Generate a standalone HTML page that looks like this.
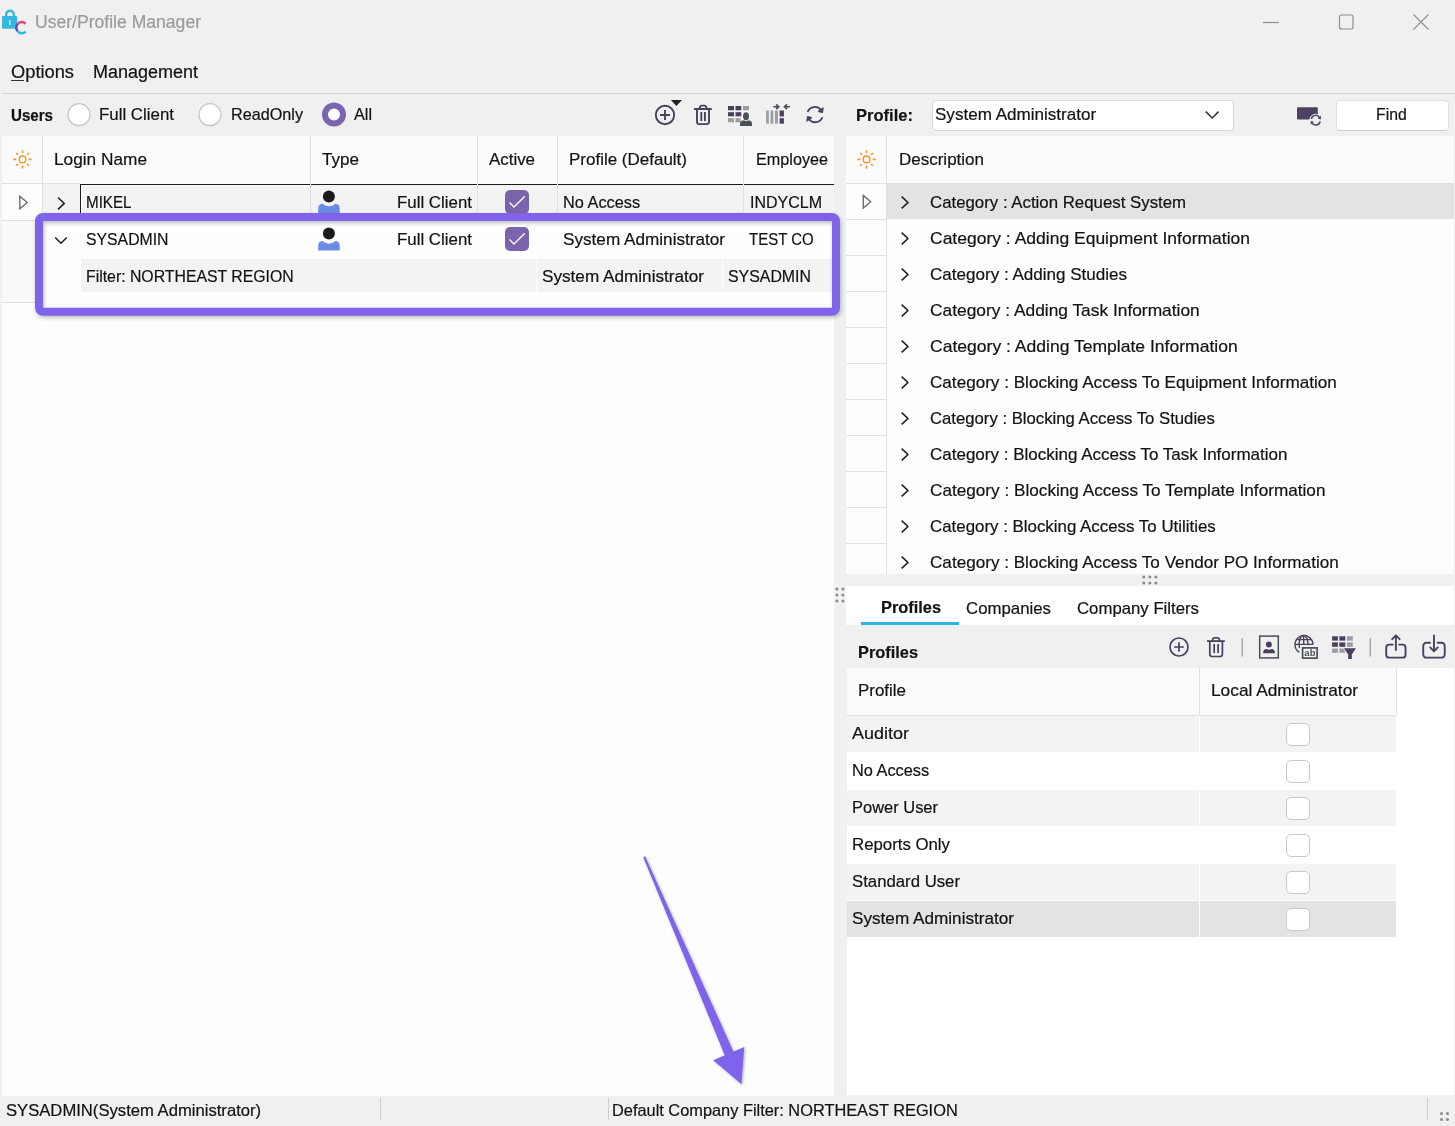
<!DOCTYPE html>
<html><head><meta charset="utf-8"><style>
html,body{margin:0;padding:0;}
body{width:1455px;height:1126px;overflow:hidden;position:relative;background:#f0f0f0;font-family:"Liberation Sans",sans-serif;}
</style></head><body>
<div style="position:absolute;left:11px;top:80px;width:13px;height:1px;background:#333;"></div>
<div style="position:absolute;left:2px;top:93px;width:1453px;height:1px;background:#d4d4d4;"></div>
<div style="position:absolute;left:931.5px;top:99.5px;width:302px;height:31px;background:#ffffff;box-sizing:border-box;border:1px solid #d6d6d6;border-radius:4px"></div>
<div style="position:absolute;left:1335.5px;top:99.5px;width:113px;height:31px;background:#ffffff;box-sizing:border-box;border:1px solid #e0e0e0;border-bottom-color:#cfcfcf;border-radius:4px"></div>
<div style="position:absolute;left:2px;top:136px;width:832px;height:960px;background:#fdfdfd;"></div>
<div style="position:absolute;left:2px;top:136px;width:832px;height:48px;background:#fbfbfb;"></div>
<div style="position:absolute;left:42px;top:136px;width:1px;height:48px;background:#e0e0e0;"></div>
<div style="position:absolute;left:310px;top:136px;width:1px;height:48px;background:#e0e0e0;"></div>
<div style="position:absolute;left:477px;top:136px;width:1px;height:48px;background:#e0e0e0;"></div>
<div style="position:absolute;left:557px;top:136px;width:1px;height:48px;background:#e0e0e0;"></div>
<div style="position:absolute;left:743px;top:136px;width:1px;height:48px;background:#e0e0e0;"></div>
<div style="position:absolute;left:2px;top:183px;width:78px;height:1px;background:#e0e0e0;"></div>
<div style="position:absolute;left:42px;top:184px;width:792px;height:36px;background:#f3f3f3;"></div>
<div style="position:absolute;left:2px;top:184px;width:40px;height:36px;background:#fdfdfd;"></div>
<div style="position:absolute;left:2px;top:220px;width:40px;height:1px;background:#e0e0e0;"></div>
<div style="position:absolute;left:42px;top:184px;width:1px;height:36px;background:#e0e0e0;"></div>
<div style="position:absolute;left:310px;top:184px;width:1px;height:36px;background:#e0e0e0;"></div>
<div style="position:absolute;left:477px;top:184px;width:1px;height:36px;background:#e0e0e0;"></div>
<div style="position:absolute;left:557px;top:184px;width:1px;height:36px;background:#e0e0e0;"></div>
<div style="position:absolute;left:743px;top:184px;width:1px;height:36px;background:#e0e0e0;"></div>
<div style="position:absolute;left:80px;top:184px;width:754px;height:1px;background:#1a1a1a;"></div>
<div style="position:absolute;left:310px;top:184px;width:1px;height:1px;background:#fdfdfd;"></div>
<div style="position:absolute;left:477px;top:184px;width:1px;height:1px;background:#fdfdfd;"></div>
<div style="position:absolute;left:557px;top:184px;width:1px;height:1px;background:#fdfdfd;"></div>
<div style="position:absolute;left:743px;top:184px;width:1px;height:1px;background:#fdfdfd;"></div>
<div style="position:absolute;left:80px;top:184px;width:1px;height:36px;background:#1a1a1a;"></div>
<div style="position:absolute;left:81px;top:185px;width:1px;height:35px;background:#ffffff;"></div>
<div style="position:absolute;left:81px;top:185px;width:229px;height:1px;background:#ffffff;"></div>
<div style="position:absolute;left:2px;top:221px;width:40px;height:81px;background:#f9f9f9;"></div>
<div style="position:absolute;left:42px;top:221px;width:1px;height:81px;background:#e0e0e0;"></div>
<div style="position:absolute;left:2px;top:302px;width:40px;height:1px;background:#e0e0e0;"></div>
<div style="position:absolute;left:43px;top:221px;width:791px;height:87px;background:#fefefe;"></div>
<div style="position:absolute;left:81px;top:259px;width:751px;height:33px;background:#f3f3f3;"></div>
<div style="position:absolute;left:536px;top:259px;width:1px;height:33px;background:#fdfdfd;"></div>
<div style="position:absolute;left:722px;top:259px;width:1px;height:33px;background:#fdfdfd;"></div>
<div style="position:absolute;left:846px;top:136px;width:608px;height:438px;background:#fdfdfd;"></div>
<div style="position:absolute;left:846px;top:136px;width:608px;height:47px;background:#fbfbfb;"></div>
<div style="position:absolute;left:886px;top:136px;width:1px;height:438px;background:#e0e0e0;"></div>
<div style="position:absolute;left:846px;top:183px;width:608px;height:1px;background:#e0e0e0;"></div>
<div style="position:absolute;left:887px;top:184px;width:567px;height:35px;background:#e3e3e3;"></div>
<div style="position:absolute;left:846px;top:219px;width:40px;height:1px;background:#e0e0e0;"></div>
<div style="position:absolute;left:846px;top:255px;width:40px;height:1px;background:#e0e0e0;"></div>
<div style="position:absolute;left:846px;top:291px;width:40px;height:1px;background:#e0e0e0;"></div>
<div style="position:absolute;left:846px;top:327px;width:40px;height:1px;background:#e0e0e0;"></div>
<div style="position:absolute;left:846px;top:363px;width:40px;height:1px;background:#e0e0e0;"></div>
<div style="position:absolute;left:846px;top:399px;width:40px;height:1px;background:#e0e0e0;"></div>
<div style="position:absolute;left:846px;top:435px;width:40px;height:1px;background:#e0e0e0;"></div>
<div style="position:absolute;left:846px;top:471px;width:40px;height:1px;background:#e0e0e0;"></div>
<div style="position:absolute;left:846px;top:507px;width:40px;height:1px;background:#e0e0e0;"></div>
<div style="position:absolute;left:846px;top:543px;width:40px;height:1px;background:#e0e0e0;"></div>
<div style="position:absolute;left:834px;top:574px;width:621px;height:12px;background:#f0f0f0;"></div>
<div style="position:absolute;left:846px;top:586px;width:608px;height:39px;background:#ffffff;"></div>
<div style="position:absolute;left:861px;top:622px;width:98px;height:4px;background:#2cb5e0;"></div>
<div style="position:absolute;left:846px;top:625px;width:608px;height:43px;background:#f0f0f0;"></div>
<div style="position:absolute;left:847px;top:668px;width:607px;height:427px;background:#ffffff;"></div>
<div style="position:absolute;left:847px;top:668px;width:549px;height:47px;background:#fbfbfb;"></div>
<div style="position:absolute;left:847px;top:715px;width:549px;height:1px;background:#e0e0e0;"></div>
<div style="position:absolute;left:1199px;top:668px;width:1px;height:47px;background:#e0e0e0;"></div>
<div style="position:absolute;left:1396px;top:668px;width:1px;height:47px;background:#e0e0e0;"></div>
<div style="position:absolute;left:847px;top:716px;width:549px;height:36px;background:#f3f3f3;"></div>
<div style="position:absolute;left:1199px;top:716px;width:1px;height:36px;background:#ffffff;"></div>
<div style="position:absolute;left:1286px;top:722.5px;width:23.5px;height:23.5px;box-sizing:border-box;border:1px solid #c9c9c9;border-radius:5px;background:#fff"></div>
<div style="position:absolute;left:847px;top:753px;width:549px;height:36px;background:#ffffff;"></div>
<div style="position:absolute;left:1199px;top:753px;width:1px;height:36px;background:#ffffff;"></div>
<div style="position:absolute;left:1286px;top:759.5px;width:23.5px;height:23.5px;box-sizing:border-box;border:1px solid #c9c9c9;border-radius:5px;background:#fff"></div>
<div style="position:absolute;left:847px;top:790px;width:549px;height:36px;background:#f3f3f3;"></div>
<div style="position:absolute;left:1199px;top:790px;width:1px;height:36px;background:#ffffff;"></div>
<div style="position:absolute;left:1286px;top:796.5px;width:23.5px;height:23.5px;box-sizing:border-box;border:1px solid #c9c9c9;border-radius:5px;background:#fff"></div>
<div style="position:absolute;left:847px;top:827px;width:549px;height:36px;background:#ffffff;"></div>
<div style="position:absolute;left:1199px;top:827px;width:1px;height:36px;background:#ffffff;"></div>
<div style="position:absolute;left:1286px;top:833.5px;width:23.5px;height:23.5px;box-sizing:border-box;border:1px solid #c9c9c9;border-radius:5px;background:#fff"></div>
<div style="position:absolute;left:847px;top:864px;width:549px;height:36px;background:#f3f3f3;"></div>
<div style="position:absolute;left:1199px;top:864px;width:1px;height:36px;background:#ffffff;"></div>
<div style="position:absolute;left:1286px;top:870.5px;width:23.5px;height:23.5px;box-sizing:border-box;border:1px solid #c9c9c9;border-radius:5px;background:#fff"></div>
<div style="position:absolute;left:847px;top:901px;width:549px;height:36px;background:#e3e3e3;"></div>
<div style="position:absolute;left:1199px;top:901px;width:1px;height:36px;background:#ffffff;"></div>
<div style="position:absolute;left:1286px;top:907.5px;width:23.5px;height:23.5px;box-sizing:border-box;border:1px solid #c9c9c9;border-radius:5px;background:#fff"></div>
<div style="position:absolute;left:380px;top:1098px;width:1px;height:22px;background:#cfcfcf;"></div>
<div style="position:absolute;left:608px;top:1098px;width:1px;height:22px;background:#cfcfcf;"></div>
<div style="position:absolute;left:1427px;top:1098px;width:1px;height:22px;background:#cfcfcf;"></div>
<div style="position:absolute;left:35px;top:14.19px;font-size:17.5px;line-height:17.5px;font-weight:normal;color:#9b9b9b;white-space:nowrap;-webkit-text-stroke:0.2px #9b9b9b;transform:scaleX(1.0040);transform-origin:0 0;">User/Profile Manager</div>
<div style="position:absolute;left:11px;top:62.76px;font-size:18px;line-height:18px;font-weight:normal;color:#121212;white-space:nowrap;-webkit-text-stroke:0.2px #121212;transform:scaleX(1.0156);transform-origin:0 0;">Options</div>
<div style="position:absolute;left:93px;top:62.76px;font-size:18px;line-height:18px;font-weight:normal;color:#121212;white-space:nowrap;-webkit-text-stroke:0.2px #121212;transform:scaleX(0.9994);transform-origin:0 0;">Management</div>
<div style="position:absolute;left:11px;top:108.26px;font-size:16px;line-height:16px;font-weight:bold;color:#121212;white-space:nowrap;-webkit-text-stroke:0.2px #121212;transform:scaleX(0.9443);transform-origin:0 0;">Users</div>
<div style="position:absolute;left:99px;top:105.61px;font-size:17px;line-height:17px;font-weight:normal;color:#121212;white-space:nowrap;-webkit-text-stroke:0.2px #121212;transform:scaleX(0.9923);transform-origin:0 0;">Full Client</div>
<div style="position:absolute;left:230.5px;top:105.61px;font-size:17px;line-height:17px;font-weight:normal;color:#121212;white-space:nowrap;-webkit-text-stroke:0.2px #121212;transform:scaleX(0.9524);transform-origin:0 0;">ReadOnly</div>
<div style="position:absolute;left:354px;top:105.61px;font-size:17px;line-height:17px;font-weight:normal;color:#121212;white-space:nowrap;-webkit-text-stroke:0.2px #121212;transform:scaleX(0.9528);transform-origin:0 0;">All</div>
<div style="position:absolute;left:855.7px;top:106.61px;font-size:17px;line-height:17px;font-weight:bold;color:#121212;white-space:nowrap;-webkit-text-stroke:0.2px #121212;transform:scaleX(0.9733);transform-origin:0 0;">Profile:</div>
<div style="position:absolute;left:935.4px;top:106.11px;font-size:17px;line-height:17px;font-weight:normal;color:#121212;white-space:nowrap;-webkit-text-stroke:0.2px #121212;transform:scaleX(1.0028);transform-origin:0 0;">System Administrator</div>
<div style="position:absolute;left:1375.6px;top:106.41px;font-size:17px;line-height:17px;font-weight:normal;color:#121212;white-space:nowrap;-webkit-text-stroke:0.2px #121212;transform:scaleX(0.9283);transform-origin:0 0;">Find</div>
<div style="position:absolute;left:54px;top:150.61px;font-size:17px;line-height:17px;font-weight:normal;color:#121212;white-space:nowrap;-webkit-text-stroke:0.2px #121212;transform:scaleX(1.0146);transform-origin:0 0;">Login Name</div>
<div style="position:absolute;left:322px;top:150.61px;font-size:17px;line-height:17px;font-weight:normal;color:#121212;white-space:nowrap;-webkit-text-stroke:0.2px #121212;transform:scaleX(1.0039);transform-origin:0 0;">Type</div>
<div style="position:absolute;left:489px;top:150.61px;font-size:17px;line-height:17px;font-weight:normal;color:#121212;white-space:nowrap;-webkit-text-stroke:0.2px #121212;transform:scaleX(0.9937);transform-origin:0 0;">Active</div>
<div style="position:absolute;left:569px;top:150.61px;font-size:17px;line-height:17px;font-weight:normal;color:#121212;white-space:nowrap;-webkit-text-stroke:0.2px #121212;transform:scaleX(0.9992);transform-origin:0 0;">Profile (Default)</div>
<div style="position:absolute;left:756px;top:150.61px;font-size:17px;line-height:17px;font-weight:normal;color:#121212;white-space:nowrap;-webkit-text-stroke:0.2px #121212;transform:scaleX(0.9524);transform-origin:0 0;">Employee</div>
<div style="position:absolute;left:85.5px;top:193.61px;font-size:17px;line-height:17px;font-weight:normal;color:#121212;white-space:nowrap;-webkit-text-stroke:0.2px #121212;transform:scaleX(0.8919);transform-origin:0 0;">MIKEL</div>
<div style="position:absolute;left:397px;top:193.61px;font-size:17px;line-height:17px;font-weight:normal;color:#121212;white-space:nowrap;-webkit-text-stroke:0.2px #121212;transform:scaleX(0.9923);transform-origin:0 0;">Full Client</div>
<div style="position:absolute;left:563px;top:193.61px;font-size:17px;line-height:17px;font-weight:normal;color:#121212;white-space:nowrap;-webkit-text-stroke:0.2px #121212;transform:scaleX(0.9600);transform-origin:0 0;">No Access</div>
<div style="position:absolute;left:750px;top:193.61px;font-size:17px;line-height:17px;font-weight:normal;color:#121212;white-space:nowrap;-webkit-text-stroke:0.2px #121212;transform:scaleX(0.9411);transform-origin:0 0;">INDYCLM</div>
<div style="position:absolute;left:85.5px;top:230.61px;font-size:17px;line-height:17px;font-weight:normal;color:#121212;white-space:nowrap;-webkit-text-stroke:0.2px #121212;transform:scaleX(0.9291);transform-origin:0 0;">SYSADMIN</div>
<div style="position:absolute;left:397px;top:230.61px;font-size:17px;line-height:17px;font-weight:normal;color:#121212;white-space:nowrap;-webkit-text-stroke:0.2px #121212;transform:scaleX(0.9923);transform-origin:0 0;">Full Client</div>
<div style="position:absolute;left:563px;top:230.61px;font-size:17px;line-height:17px;font-weight:normal;color:#121212;white-space:nowrap;-webkit-text-stroke:0.2px #121212;transform:scaleX(1.0090);transform-origin:0 0;">System Administrator</div>
<div style="position:absolute;left:749px;top:230.61px;font-size:17px;line-height:17px;font-weight:normal;color:#121212;white-space:nowrap;-webkit-text-stroke:0.2px #121212;transform:scaleX(0.8823);transform-origin:0 0;">TEST CO</div>
<div style="position:absolute;left:86px;top:267.61px;font-size:17px;line-height:17px;font-weight:normal;color:#121212;white-space:nowrap;-webkit-text-stroke:0.2px #121212;transform:scaleX(0.9305);transform-origin:0 0;">Filter: NORTHEAST REGION</div>
<div style="position:absolute;left:542px;top:267.61px;font-size:17px;line-height:17px;font-weight:normal;color:#121212;white-space:nowrap;-webkit-text-stroke:0.2px #121212;transform:scaleX(1.0090);transform-origin:0 0;">System Administrator</div>
<div style="position:absolute;left:728px;top:267.61px;font-size:17px;line-height:17px;font-weight:normal;color:#121212;white-space:nowrap;-webkit-text-stroke:0.2px #121212;transform:scaleX(0.9348);transform-origin:0 0;">SYSADMIN</div>
<div style="position:absolute;left:898.7px;top:150.61px;font-size:17px;line-height:17px;font-weight:normal;color:#121212;white-space:nowrap;-webkit-text-stroke:0.2px #121212;transform:scaleX(0.9996);transform-origin:0 0;">Description</div>
<div style="position:absolute;left:930px;top:193.81px;font-size:17px;line-height:17px;font-weight:normal;color:#121212;white-space:nowrap;-webkit-text-stroke:0.2px #121212;transform:scaleX(0.9891);transform-origin:0 0;">Category : Action Request System</div>
<div style="position:absolute;left:930px;top:229.81px;font-size:17px;line-height:17px;font-weight:normal;color:#121212;white-space:nowrap;-webkit-text-stroke:0.2px #121212;transform:scaleX(1.0294);transform-origin:0 0;">Category : Adding Equipment Information</div>
<div style="position:absolute;left:930px;top:265.81px;font-size:17px;line-height:17px;font-weight:normal;color:#121212;white-space:nowrap;-webkit-text-stroke:0.2px #121212;transform:scaleX(1.0025);transform-origin:0 0;">Category : Adding Studies</div>
<div style="position:absolute;left:930px;top:301.81px;font-size:17px;line-height:17px;font-weight:normal;color:#121212;white-space:nowrap;-webkit-text-stroke:0.2px #121212;transform:scaleX(1.0206);transform-origin:0 0;">Category : Adding Task Information</div>
<div style="position:absolute;left:930px;top:337.81px;font-size:17px;line-height:17px;font-weight:normal;color:#121212;white-space:nowrap;-webkit-text-stroke:0.2px #121212;transform:scaleX(1.0315);transform-origin:0 0;">Category : Adding Template Information</div>
<div style="position:absolute;left:930px;top:373.81px;font-size:17px;line-height:17px;font-weight:normal;color:#121212;white-space:nowrap;-webkit-text-stroke:0.2px #121212;transform:scaleX(1.0065);transform-origin:0 0;">Category : Blocking Access To Equipment Information</div>
<div style="position:absolute;left:930px;top:409.81px;font-size:17px;line-height:17px;font-weight:normal;color:#121212;white-space:nowrap;-webkit-text-stroke:0.2px #121212;transform:scaleX(0.9827);transform-origin:0 0;">Category : Blocking Access To Studies</div>
<div style="position:absolute;left:930px;top:445.81px;font-size:17px;line-height:17px;font-weight:normal;color:#121212;white-space:nowrap;-webkit-text-stroke:0.2px #121212;transform:scaleX(0.9999);transform-origin:0 0;">Category : Blocking Access To Task Information</div>
<div style="position:absolute;left:930px;top:481.81px;font-size:17px;line-height:17px;font-weight:normal;color:#121212;white-space:nowrap;-webkit-text-stroke:0.2px #121212;transform:scaleX(1.0100);transform-origin:0 0;">Category : Blocking Access To Template Information</div>
<div style="position:absolute;left:930px;top:517.81px;font-size:17px;line-height:17px;font-weight:normal;color:#121212;white-space:nowrap;-webkit-text-stroke:0.2px #121212;transform:scaleX(0.9927);transform-origin:0 0;">Category : Blocking Access To Utilities</div>
<div style="position:absolute;left:930px;top:553.81px;font-size:17px;line-height:17px;font-weight:normal;color:#121212;white-space:nowrap;-webkit-text-stroke:0.2px #121212;transform:scaleX(1.0067);transform-origin:0 0;">Category : Blocking Access To Vendor PO Information</div>
<div style="position:absolute;left:880.5px;top:598.61px;font-size:17px;line-height:17px;font-weight:bold;color:#121212;white-space:nowrap;-webkit-text-stroke:0.2px #121212;transform:scaleX(0.9622);transform-origin:0 0;">Profiles</div>
<div style="position:absolute;left:966px;top:599.61px;font-size:17px;line-height:17px;font-weight:normal;color:#121212;white-space:nowrap;-webkit-text-stroke:0.2px #121212;transform:scaleX(0.9885);transform-origin:0 0;">Companies</div>
<div style="position:absolute;left:1077px;top:599.61px;font-size:17px;line-height:17px;font-weight:normal;color:#121212;white-space:nowrap;-webkit-text-stroke:0.2px #121212;transform:scaleX(0.9858);transform-origin:0 0;">Company Filters</div>
<div style="position:absolute;left:858px;top:643.61px;font-size:17px;line-height:17px;font-weight:bold;color:#121212;white-space:nowrap;-webkit-text-stroke:0.2px #121212;transform:scaleX(0.9622);transform-origin:0 0;">Profiles</div>
<div style="position:absolute;left:858px;top:682.11px;font-size:17px;line-height:17px;font-weight:normal;color:#121212;white-space:nowrap;-webkit-text-stroke:0.2px #121212;transform:scaleX(0.9961);transform-origin:0 0;">Profile</div>
<div style="position:absolute;left:1211px;top:682.11px;font-size:17px;line-height:17px;font-weight:normal;color:#121212;white-space:nowrap;-webkit-text-stroke:0.2px #121212;transform:scaleX(1.0172);transform-origin:0 0;">Local Administrator</div>
<div style="position:absolute;left:852px;top:725.21px;font-size:17px;line-height:17px;font-weight:normal;color:#121212;white-space:nowrap;-webkit-text-stroke:0.2px #121212;transform:scaleX(1.0582);transform-origin:0 0;">Auditor</div>
<div style="position:absolute;left:852px;top:762.21px;font-size:17px;line-height:17px;font-weight:normal;color:#121212;white-space:nowrap;-webkit-text-stroke:0.2px #121212;transform:scaleX(0.9600);transform-origin:0 0;">No Access</div>
<div style="position:absolute;left:852px;top:799.21px;font-size:17px;line-height:17px;font-weight:normal;color:#121212;white-space:nowrap;-webkit-text-stroke:0.2px #121212;transform:scaleX(0.9684);transform-origin:0 0;">Power User</div>
<div style="position:absolute;left:852px;top:836.21px;font-size:17px;line-height:17px;font-weight:normal;color:#121212;white-space:nowrap;-webkit-text-stroke:0.2px #121212;transform:scaleX(0.9879);transform-origin:0 0;">Reports Only</div>
<div style="position:absolute;left:852px;top:873.21px;font-size:17px;line-height:17px;font-weight:normal;color:#121212;white-space:nowrap;-webkit-text-stroke:0.2px #121212;transform:scaleX(0.9853);transform-origin:0 0;">Standard User</div>
<div style="position:absolute;left:852px;top:910.21px;font-size:17px;line-height:17px;font-weight:normal;color:#121212;white-space:nowrap;-webkit-text-stroke:0.2px #121212;transform:scaleX(1.0090);transform-origin:0 0;">System Administrator</div>
<div style="position:absolute;left:6px;top:1102.03px;font-size:16.5px;line-height:16.5px;font-weight:normal;color:#121212;white-space:nowrap;-webkit-text-stroke:0.2px #121212;transform:scaleX(1.0080);transform-origin:0 0;">SYSADMIN(System Administrator)</div>
<div style="position:absolute;left:612px;top:1102.03px;font-size:16.5px;line-height:16.5px;font-weight:normal;color:#121212;white-space:nowrap;-webkit-text-stroke:0.2px #121212;transform:scaleX(0.9913);transform-origin:0 0;">Default Company Filter: NORTHEAST REGION</div>
<svg style="position:absolute;left:0;top:0" width="1455" height="1126" viewBox="0 0 1455 1126">
<defs>
<filter id="sh" x="-5%" y="-5%" width="110%" height="115%"><feGaussianBlur in="SourceAlpha" stdDeviation="2"/><feOffset dx="0.5" dy="1.5"/><feComponentTransfer><feFuncA type="linear" slope="0.27"/></feComponentTransfer><feMerge><feMergeNode/><feMergeNode in="SourceGraphic"/></feMerge></filter>
<filter id="sh2" x="-20%" y="-10%" width="140%" height="120%"><feGaussianBlur in="SourceAlpha" stdDeviation="1.5"/><feOffset dx="1" dy="1"/><feComponentTransfer><feFuncA type="linear" slope="0.3"/></feComponentTransfer><feMerge><feMergeNode/><feMergeNode in="SourceGraphic"/></feMerge></filter>
</defs>
<!-- app icon -->
<path d="M6.2 16.5 V14.5 A3.8 3.8 0 0 1 13.8 14.5 V16.5" fill="none" stroke="#33b8df" stroke-width="2.4"/>
<rect x="2" y="16" width="15.2" height="12.8" rx="1.2" fill="#33b8df"/>
<rect x="9.2" y="20" width="1.2" height="4.8" fill="#fff"/>
<path d="M25.5 23.8 A5 5 0 0 0 17.6 24.2" fill="none" stroke="#e0458f" stroke-width="2.6"/>
<path d="M17.6 24.2 A5 5 0 0 0 17.6 31" fill="none" stroke="#6a4aa8" stroke-width="2.6"/>
<path d="M17.6 31 A5 5 0 0 0 25.5 31.6" fill="none" stroke="#2db8e0" stroke-width="2.6"/>
<!-- window controls -->
<line x1="1263" y1="22.5" x2="1279" y2="22.5" stroke="#8f8f8f" stroke-width="1.2"/>
<rect x="1339.5" y="15" width="13.5" height="14" rx="2" fill="none" stroke="#8f8f8f" stroke-width="1.2"/>
<path d="M1413.5 14.5 L1428.5 29.5 M1428.5 14.5 L1413.5 29.5" stroke="#8f8f8f" stroke-width="1.2"/>
<!-- radios -->
<circle cx="79" cy="114.7" r="11" fill="#fff" stroke="#c6c6c6" stroke-width="1.2"/>
<circle cx="210" cy="114.7" r="11" fill="#fff" stroke="#c6c6c6" stroke-width="1.2"/>
<circle cx="334" cy="114.5" r="9" fill="#fff" stroke="#7a64ad" stroke-width="6"/>
<!-- left toolbar icons -->
<g fill="none" stroke="#4a3f5e" stroke-width="1.9">
<circle cx="665" cy="115" r="9.2"/>
<path d="M660 115 H670 M665 110 V120"/>
<path d="M694 109 H711.8 M699.8 108.5 V107.5 A2.2 2.2 0 0 1 702 105.6 H704.2 A2.2 2.2 0 0 1 706.4 107.5 V108.5 M697 109.5 V122 A2.2 2.2 0 0 0 699.2 124.1 H706.8 A2.2 2.2 0 0 0 709 122 V109.5 M701.3 112 V121 M704.9 112 V121"/>
</g>
<path d="M670.9 100.1 H682 L676.4 105.9 Z" fill="#222"/>
<g>
<rect x="728" y="106" width="6" height="4.3" fill="#4a3f5e"/><rect x="735.5" y="106" width="5.8" height="4.3" fill="#4a3f5e"/><rect x="743" y="106" width="6" height="4.3" fill="#9a9ea2"/>
<rect x="728" y="112.2" width="6" height="4.1" fill="#4a3f5e"/><rect x="735.5" y="112.2" width="5.8" height="4.1" fill="#4a3f5e"/>
<rect x="728" y="118.2" width="6" height="4.1" fill="#9a9ea2"/><rect x="735.5" y="118.2" width="5" height="4.1" fill="#9a9ea2"/>
<ellipse cx="746" cy="116.3" rx="4.2" ry="5.2" fill="#fff" opacity="0.9"/>
<ellipse cx="746" cy="116.3" rx="3" ry="4" fill="#4a5058"/>
<path d="M740 126 V123.8 Q740 121 743 120.6 L744.5 120.6 Q746 122 747.5 120.6 L749 120.6 Q752 121 752 123.8 V126 Z" fill="#4a5058"/>
</g>
<g fill="#9a9ea2">
<rect x="766.1" y="110.5" width="2.7" height="13.2"/><rect x="770.5" y="110.5" width="2.8" height="13.2"/><rect x="775" y="110.5" width="2.9" height="13.2"/>
</g>
<rect x="779.6" y="110.5" width="4.3" height="6" fill="#4a3f5e"/><rect x="779.6" y="118.2" width="4.3" height="5.5" fill="#4a3f5e"/>
<g fill="none" stroke="#4a5058" stroke-width="1.6">
<path d="M773.3 106.7 H778.6 M776.2 104.3 L778.8 106.7 L776.2 109.1"/>
<path d="M784.6 106.7 H789.9 M787 104.3 L784.4 106.7 L787 109.1"/>
</g>
<g fill="none" stroke="#4a3f5e" stroke-width="1.8">
<path d="M807.6 112 A7.8 7.8 0 0 1 821.2 110.2"/>
<path d="M822.4 117.2 A7.8 7.8 0 0 1 808.8 119"/>
</g>
<path d="M818 111.5 L822.6 112.6 L823.2 107.8 Z" fill="#4a3f5e" stroke="#4a3f5e" stroke-width="1"/>
<path d="M812 117.6 L807.4 116.5 L806.8 121.3 Z" fill="#4a3f5e" stroke="#4a3f5e" stroke-width="1"/>
<!-- sun icons -->
<g fill="none" stroke="#f7901e">
<circle cx="22.5" cy="159.4" r="3.35" stroke-width="1.35"/>
<path stroke-width="1.6" d="M22.5 150.4 V153.1 M22.5 165.7 V168.4 M13.5 159.4 H16.2 M28.8 159.4 H31.5 M16.2 153.1 L17.9 154.8 M27.1 164 L28.8 165.7 M28.8 153.1 L27.1 154.8 M16.2 165.7 L17.9 164"/>
</g>
<g fill="none" stroke="#f7901e" transform="translate(844,0)">
<circle cx="22.5" cy="159.4" r="3.35" stroke-width="1.35"/>
<path stroke-width="1.6" d="M22.5 150.4 V153.1 M22.5 165.7 V168.4 M13.5 159.4 H16.2 M28.8 159.4 H31.5 M16.2 153.1 L17.9 154.8 M27.1 164 L28.8 165.7 M28.8 153.1 L27.1 154.8 M16.2 165.7 L17.9 164"/>
</g>
<!-- row indicators -->
<path d="M19.8 196.2 L27.2 202.5 L19.8 208.8 Z" fill="none" stroke="#6c6c6c" stroke-width="1.4" stroke-linejoin="miter"/>
<path d="M863.3 195.4 L870.7 201.7 L863.3 208 Z" fill="none" stroke="#6c6c6c" stroke-width="1.4"/>
<!-- chevrons -->
<g fill="none" stroke="#222" stroke-width="1.6">
<path d="M58 197.5 L64.2 203.4 L58 209.3"/>
<path d="M55.2 237.5 L61 243.2 L66.8 237.5"/>
<path d="M1205.8 111.6 L1212.2 118 L1218.6 111.6" stroke="#333" stroke-width="1.5"/>
</g>
<g fill="none" stroke="#222" stroke-width="1.6" id="chev">
<path d="M901.7 196.6 L907.9 202.5 L901.7 208.4"/>
<path d="M901.7 232.6 L907.9 238.5 L901.7 244.4"/>
<path d="M901.7 268.6 L907.9 274.5 L901.7 280.4"/>
<path d="M901.7 304.6 L907.9 310.5 L901.7 316.4"/>
<path d="M901.7 340.6 L907.9 346.5 L901.7 352.4"/>
<path d="M901.7 376.6 L907.9 382.5 L901.7 388.4"/>
<path d="M901.7 412.6 L907.9 418.5 L901.7 424.4"/>
<path d="M901.7 448.6 L907.9 454.5 L901.7 460.4"/>
<path d="M901.7 484.6 L907.9 490.5 L901.7 496.4"/>
<path d="M901.7 520.6 L907.9 526.5 L901.7 532.4"/>
<path d="M901.7 556.6 L907.9 562.5 L901.7 568.4"/>
</g>
<!-- person icons -->
<g>
<path d="M318.2 213.5 V208.5 Q318.2 204 322.5 203.7 Q329 209 335.5 203.7 Q339.7 204 339.7 208.5 V213.5 Z" fill="#6a8be6"/>
<circle cx="328.9" cy="196.5" r="6" fill="#1a1a1a"/>
<path d="M318.2 250.6 V245.8 Q318.2 241.3 322.5 241 Q329 246.3 335.5 241 Q339.7 241.3 339.7 245.8 V250.6 Z" fill="#6a8be6"/>
<circle cx="328.9" cy="233.5" r="6" fill="#1a1a1a"/>
</g>
<!-- checkboxes -->
<g>
<rect x="505" y="190" width="24" height="24" rx="5" fill="#7a64ab"/>
<path d="M509.5 202.5 L514 207 L524.8 196.2" fill="none" stroke="#fff" stroke-width="1.3"/>
<rect x="505" y="227" width="24" height="24" rx="5" fill="#7a64ab"/>
<path d="M509.5 239.5 L514 244 L524.8 233.2" fill="none" stroke="#fff" stroke-width="1.3"/>
</g>
<!-- combo & find -->
<!-- right toolbar icon -->
<path d="M1297 108.3 A1 1 0 0 1 1298 107.3 H1316.8 A1 1 0 0 1 1317.8 108.3 V114.2 A6.5 6.5 0 0 0 1309.3 119.4 H1298 A1 1 0 0 1 1297 118.4 Z" fill="#4d4360"/>
<g fill="none" stroke="#4d4360" stroke-width="1.5">
<path d="M1311.4 119 A4.4 4.4 0 0 1 1319.6 117.6"/>
<path d="M1320.2 121.4 A4.4 4.4 0 0 1 1312 122.8"/>
</g>
<path d="M1317.6 118.6 L1320.8 119.4 L1321 115.6 Z" fill="#4d4360"/>
<path d="M1314 121.8 L1310.8 121 L1310.6 124.8 Z" fill="#4d4360"/>
<!-- lower toolbar -->
<g fill="none" stroke="#4a3f5e" stroke-width="1.7">
<circle cx="1179" cy="647" r="9"/>
<path d="M1174.2 647 H1183.8 M1179 642.2 V651.8"/>
<path d="M1207 641.2 H1224.8 M1212.6 641 V640 A2.2 2.2 0 0 1 1214.8 637.8 H1217.2 A2.2 2.2 0 0 1 1219.4 640 V641 M1209.8 641.5 V654.3 A2.2 2.2 0 0 0 1212 656.5 H1220.2 A2.2 2.2 0 0 0 1222.4 654.3 V641.5 M1214.2 644 V653 M1218.1 644 V653"/>
</g>
<path d="M1242.2 638 V656.4 M1370.3 638 V656.4" stroke="#9a9a9a" stroke-width="1.2"/>
<rect x="1259.7" y="636.1" width="18.6" height="21.8" fill="none" stroke="#4a5058" stroke-width="1.5"/>
<circle cx="1268.9" cy="644.5" r="3" fill="#4a3f5e"/>
<path d="M1263 653.2 Q1263 649.2 1266.5 649 Q1269 650.5 1271.5 649 Q1275 649.2 1275 653.2 Z" fill="#4a3f5e"/>
<g fill="none" stroke="#4a3f5e" stroke-width="1.4">
<path d="M1313 644.4 A9 9 0 1 0 1299.3 652.3"/>
<path d="M1303.7 635.4 A4.6 9 0 0 0 1299.5 648"/>
<path d="M1303.7 635.4 A4.6 9 0 0 1 1308 644.4"/>
<path d="M1294.7 644.4 H1313 M1296.1 639.6 H1311.3 M1303.7 635.4 V644.4"/>
</g>
<rect x="1302.6" y="647.9" width="14.5" height="10.2" fill="#f4f4f4" stroke="#4a5058" stroke-width="1.7"/>
<text x="1309.9" y="655.7" font-family="Liberation Sans" font-weight="bold" font-size="9.5" fill="#4a5058" text-anchor="middle" opacity="0.99">ab</text>
<g>
<rect x="1332.1" y="636.3" width="5.8" height="4.3" fill="#4a3f5e"/><rect x="1339.3" y="636.3" width="6" height="4.3" fill="#4a3f5e"/><rect x="1347" y="636.3" width="5.8" height="4.3" fill="#9a9ea2"/>
<rect x="1332.1" y="642.4" width="5.8" height="4.4" fill="#4a3f5e"/><rect x="1339.3" y="642.4" width="6" height="4.4" fill="#4a3f5e"/><rect x="1347" y="642.4" width="5.8" height="4.4" fill="#9a9ea2"/>
<rect x="1332.1" y="648.5" width="5.8" height="4.3" fill="#9a9ea2"/><rect x="1339.3" y="648.5" width="6" height="4.3" fill="#9a9ea2"/>
<path d="M1342.9 647.5 H1357 L1352.8 654.9 V659.6 H1347.2 V654.9 Z" fill="#f0f0f0"/>
<path d="M1343.9 648.3 H1355.9 L1351.8 654.5 V658.9 H1348.2 V654.5 Z" fill="#4a3f5e"/>
</g>
<g fill="none" stroke="#4a3f5e" stroke-width="1.9" stroke-linecap="round" stroke-linejoin="round">
<path d="M1392.7 644.65 H1389.25 A3 3 0 0 0 1386.25 647.65 V654.65 A3 3 0 0 0 1389.25 657.65 H1402.55 A3 3 0 0 0 1405.55 654.65 V647.65 A3 3 0 0 0 1402.55 644.65 H1399.2"/>
<path d="M1395.9 650 V635.5 M1392.2 639.2 L1395.9 635.4 L1399.6 639.2"/>
<path d="M1430 642.75 H1426.45 A3.2 3.2 0 0 0 1423.25 645.95 V654.45 A3.2 3.2 0 0 0 1426.45 657.65 H1441.55 A3.2 3.2 0 0 0 1444.75 654.45 V645.95 A3.2 3.2 0 0 0 1441.55 642.75 H1437.7"/>
<path d="M1434 635.5 V651 M1430.2 647.4 L1434 651.3 L1437.8 647.4"/>
</g>
<!-- splitter grips -->
<g fill="#8a8a8a">
<circle cx="1143.8" cy="576.9" r="1.5"/><circle cx="1149.9" cy="576.9" r="1.5"/><circle cx="1155.9" cy="576.9" r="1.5"/>
<circle cx="1143.8" cy="582.9" r="1.5"/><circle cx="1149.9" cy="582.9" r="1.5"/><circle cx="1155.9" cy="582.9" r="1.5"/>
<circle cx="836.9" cy="589" r="1.5"/><circle cx="842.9" cy="589" r="1.5"/>
<circle cx="836.9" cy="595" r="1.5"/><circle cx="842.9" cy="595" r="1.5"/>
<circle cx="836.9" cy="601" r="1.5"/><circle cx="842.9" cy="601" r="1.5"/>
<circle cx="1441.5" cy="1113.5" r="1.5"/><circle cx="1447.5" cy="1113.5" r="1.5"/>
<circle cx="1441.5" cy="1119.5" r="1.5"/><circle cx="1447.5" cy="1119.5" r="1.5"/>
</g>
<!-- annotation box -->
<path fill-rule="evenodd" d="M43 213 H832 A8 8 0 0 1 840 221 V307.8 A8 8 0 0 1 832 315.8 H43 A8 8 0 0 1 35 307.8 V221 A8 8 0 0 1 43 213 Z M43 221 V307.8 H832 V221 Z" fill="#7f64ea" filter="url(#sh)"/>
<!-- arrow -->
<g filter="url(#sh2)">
<path d="M643.3 857.4 Q644.2 856 645.4 856.8 L733.6 1051.7 L724.8 1055.4 Z" fill="#7f64ea"/>
<path d="M713.2 1060.3 L744.3 1047.1 L741.5 1084.3 Z" fill="#7f64ea"/>
</g>
</svg>

</body></html>
